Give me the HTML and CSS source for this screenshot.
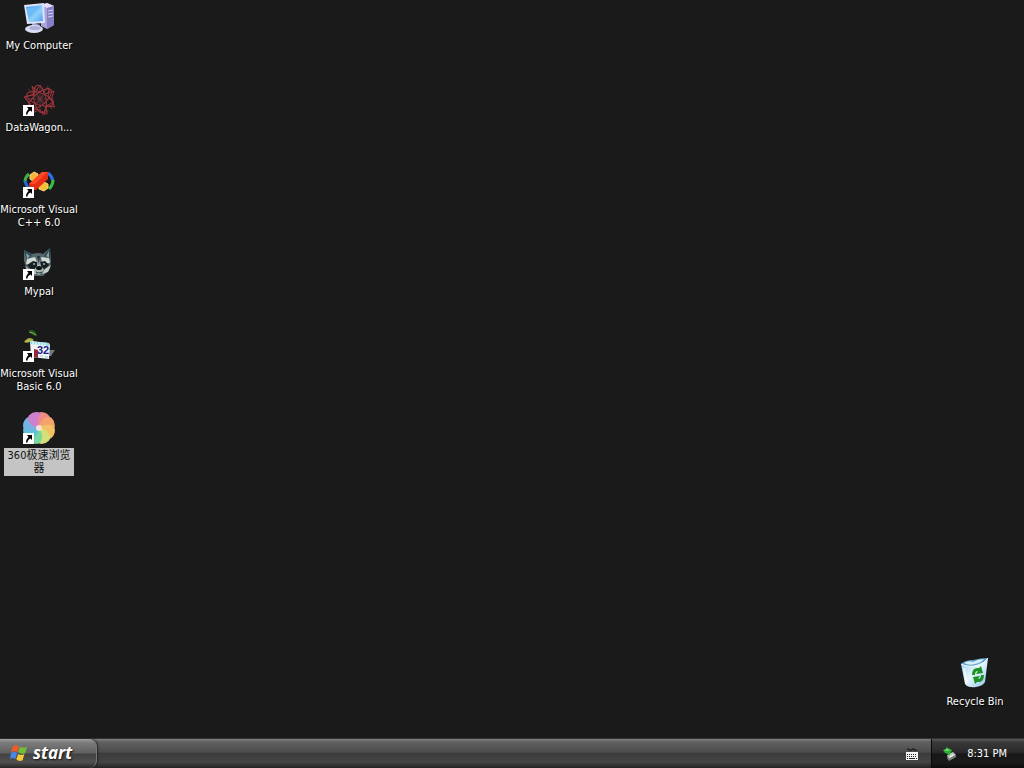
FILE: index.html
```html
<!DOCTYPE html>
<html lang="en">

<head>
    <meta charset="UTF-8">
    <meta name="viewport" content="width=device-width, initial-scale=1.0">
    <title>Desktop</title>
    <link rel="stylesheet" href="styles.css">
</head>

<body>
    <!-- Shared shapes -->
    <svg class="defs" aria-hidden="true">
        <defs>
            <symbol id="shortcut" viewBox="0 0 11 11">
                <rect width="11" height="11" fill="#fff"/>
                <path d="M4 2h5v5L7.500 5.500C5.500 6.500 4.500 7.500 4.500 9.500H3C3 7 4 5.500 5.500 4z" fill="#000"/>
            </symbol>
        </defs>
    </svg>

    <main class="desktop">
        <div class="icons">
            <button type="button" class="icon">
                <svg class="picture" viewBox="0 0 32 32" aria-hidden="true">
                    <defs>
                        <linearGradient id="screen" x1="0" y1="0" x2="1" y2="1">
                            <stop offset="0" stop-color="#3f9df0"/>
                            <stop offset="0.6" stop-color="#8fd0fb"/>
                            <stop offset="1" stop-color="#4c9df0"/>
                        </linearGradient>
                    </defs>
                    <path d="M18 3l6-2 7 3v19l-7 4-6-3z" fill="#a9a5dc"/>
                    <path d="M18 3l6-2 7 3-7 2z" fill="#e3e1fa"/>
                    <path d="M24 6l7-2v19l-7 4z" fill="#8580c4"/>
                    <path d="M25 9l5-1M25 12l5-1M25 15l5-1" stroke="#d5d2f5" stroke-width="1"/>
                    <path d="M9 20l8 3v4l-8-2z" fill="#9c9bcb"/>
                    <ellipse cx="11" cy="27" rx="9" ry="4" fill="#dcdcf2"/>
                    <ellipse cx="12" cy="26" rx="6" ry="2" fill="#aeb0dc"/>
                    <path d="M1 3l20-2 1 20-18 1z" fill="#dde4f8"/>
                    <path d="M3 5l16-2 1 16-14 1z" fill="url(#screen)"/>
                    <path d="M4 6l13-1-11 11z" fill="#6dbbf8"/>
                </svg>
                <span class="label">My Computer</span>
            </button>

            <button type="button" class="icon">
                <svg class="picture" viewBox="0 0 32 32" aria-hidden="true">
                    <g fill="none" stroke="#a5343c" stroke-width="1">
                        <path d="M17 1l5 9 9-3-3 9 4 7-9-1-2 9-7-6-8 3 1-9-6-6 9-2z"/>
                        <path d="M9 2l7 6 10-4-1 9 6 5-8 4 1 8-8-4-9 4 0-9-5-8 9-3z"/>
                        <ellipse cx="17" cy="15" rx="14" ry="6" transform="rotate(20 17 15)"/>
                        <ellipse cx="17" cy="15" rx="14" ry="6" transform="rotate(80 17 15)"/>
                        <ellipse cx="17" cy="15" rx="14" ry="6" transform="rotate(140 17 15)"/>
                    </g>
                    <g fill="none" stroke="#7c3a40" stroke-width="0.8">
                        <path d="M5 5l24 20M29 5L5 25M17 1v28M2 15h29M9 2l16 26M25 2L9 28"/>
                    </g>
                    <use href="#shortcut" x="0" y="21" width="11" height="11"/>
                </svg>
                <span class="label">DataWagon...</span>
            </button>

            <button type="button" class="icon">
                <svg class="picture" viewBox="0 0 32 32" aria-hidden="true">
                    <g fill="none" stroke-width="3">
                        <path d="M6 8Q2 11 2 16" stroke="#3fae49"/>
                        <path d="M2 15Q3 20 7 23" stroke="#2467d8"/>
                        <path d="M25 7Q29 10 30 15" stroke="#2c6fe0"/>
                        <path d="M30 14Q30 19 26 23" stroke="#38c23e"/>
                    </g>
                    <path d="M7 9l4-3 4 2v5l-4 3-4-3z" fill="#f6b43c" stroke="#fbdc85" stroke-width="1"/>
                    <path d="M16 20l5-4 4 2v4l-4 3-5-2z" fill="#f2bf38" stroke="#f9d873" stroke-width="1"/>
                    <path d="M6 18L19 6h6v7L13 24H7z" fill="#e62e14"/>
                    <path d="M6 18L19 6h6L12 18z" fill="#ff4a25"/>
                    <use href="#shortcut" x="0" y="21" width="11" height="11"/>
                </svg>
                <span class="label">Microsoft Visual C++ 6.0</span>
            </button>

            <button type="button" class="icon">
                <svg class="picture" viewBox="0 0 32 32" aria-hidden="true">
                    <path d="M1 2l8 4q7-2 11 0l7-6 1 12-1 9-7 7h-9l-7-5-3-10z" fill="#54676b"/>
                    <path d="M1 2l8 5-5 6zM27 0l-6 8 6 4z" fill="#24495a"/>
                    <path d="M3 5l4 3-3 3zM26 3l-3 5 3 2z" fill="#8c999a"/>
                    <path d="M4 11l8-2 2 5-8 3-3-1zM18 9l8 1 1 5-8 0z" fill="#d3dad4"/>
                    <path d="M4 17l6-4 4 1 1 5-6 3zM17 14l5-1 4 4-4 4-5-2z" fill="#172125"/>
                    <path d="M2 18l5 4 5-1 1 5-6 1zM28 17l-6 4-3 5 6-2z" fill="#c7cec6"/>
                    <path d="M15 9h1l2 9 3 4-5 5-6-4 4-5z" fill="#abb5b1"/>
                    <path d="M14 8h3l-1 9z" fill="#26373d"/>
                    <ellipse cx="16" cy="20" rx="3" ry="2" fill="#0d1113"/>
                    <circle cx="11" cy="16" r="1" fill="#9daea9"/>
                    <circle cx="21" cy="16" r="1" fill="#9daea9"/>
                    <path d="M13 24q3 2 6 0" fill="none" stroke="#334146" stroke-width="1"/>
                    <use href="#shortcut" x="0" y="21" width="11" height="11"/>
                </svg>
                <span class="label">Mypal</span>
            </button>

            <button type="button" class="icon">
                <svg class="picture" viewBox="0 0 32 32" aria-hidden="true">
                    <path d="M6 0q7-1 8 6-6 0-8-6z" fill="#195b20"/>
                    <path d="M1 12q5-7 10-2-5 4-10 2z" fill="#a3a943"/>
                    <path d="M6 2q5 1 7 3M2 12q4-2 8-2" stroke="#d0cc62" stroke-width="0.7" fill="none"/>
                    <path d="M26 20h6l-4 6h-3z" fill="#777"/>
                    <path d="M7 11l19 2 1 2-1 14-18-2z" fill="#f1f5f7"/>
                    <path d="M7 11l19 2v3l-19-2z" fill="#97dce5"/>
                    <path d="M10 11v3M13 12v3M16 12v3M19 13v3M22 13v3" stroke="#fff" stroke-width="1"/>
                    <path d="M11 19l4 1v8l-4-1z" fill="#932b35"/>
                    <path d="M17 26h3M22 27h3" stroke="#90cfd8" stroke-width="1"/>
                    <text class="glyph" x="14" y="24">32</text>
                    <use href="#shortcut" x="0" y="21" width="11" height="11"/>
                </svg>
                <span class="label">Microsoft Visual Basic 6.0</span>
            </button>

            <button type="button" class="icon selected">
                <svg class="picture" viewBox="0 0 32 32" aria-hidden="true">
                    <defs>
                        <path id="petal" d="M16 16C11 10 12 1 18 0Q25 0 28 7Q22 7 16 16z"/>
                    </defs>
                    <circle cx="16" cy="16" r="13" fill="#dfa7b0"/>
                    <use href="#petal" fill="#f28b86"/>
                    <use href="#petal" fill="#f5a36c" transform="rotate(45 16 16)"/>
                    <use href="#petal" fill="#f3c163" transform="rotate(90 16 16)"/>
                    <use href="#petal" fill="#d6e078" transform="rotate(135 16 16)"/>
                    <use href="#petal" fill="#79d7a0" transform="rotate(180 16 16)"/>
                    <use href="#petal" fill="#5cc3d4" transform="rotate(225 16 16)"/>
                    <use href="#petal" fill="#76b4e6" transform="rotate(270 16 16)"/>
                    <use href="#petal" fill="#cf80cc" transform="rotate(315 16 16)"/>
                    <circle cx="16" cy="16" r="3" fill="#f8dfd8"/>
                    <use href="#shortcut" x="0" y="21" width="11" height="11"/>
                </svg>
                <span class="label" lang="zh">360极速浏览器</span>
            </button>
        </div>

        <button type="button" class="icon recycle">
            <svg class="picture" viewBox="0 0 32 32" aria-hidden="true">
                <defs>
                    <linearGradient id="bin" x1="0" y1="0" x2="1" y2="1">
                        <stop offset="0" stop-color="#8ccdf0"/>
                        <stop offset="0.5" stop-color="#e6f6fc"/>
                        <stop offset="1" stop-color="#87c1e8"/>
                    </linearGradient>
                </defs>
                <path d="M2 6q14 2 27-6l-3 24q-2 4-9 5-8 1-11-3z" fill="url(#bin)"/>
                <path d="M2 6q4-4 12-4 8-2 15-2-3 5-10 7-9 3-17-1z" fill="#5fa3cc"/>
                <path d="M5 5q5-3 9-1 5-3 11-3-3 4-9 5-6 2-11-1z" fill="#d8eff9"/>
                <path d="M2 6q8 4 17 1 7-2 10-7" fill="none" stroke="#f7fdff" stroke-width="1"/>
                <path d="M5 10l3 15" stroke="#fff" stroke-width="2" opacity="0.6"/>
                <g fill="#1c9222">
                    <path d="M13 17q0-8 7-7l2-2 2 7-7 1 2-3q-3 0-3 4z"/>
                    <path d="M25 17q0 8-7 7l-2 2-2-7 7-1-2 3q3 0 3-4z"/>
                </g>
            </svg>
            <span class="label">Recycle Bin</span>
        </button>
    </main>

    <footer class="taskbar">
        <button type="button" class="start">
            <svg class="flag" viewBox="0 0 20 20" aria-hidden="true">
                <path d="M3 3q4-3 7 0L8 9Q5 7 1 9z" fill="#ee5a2a"/>
                <path d="M11 3q4 2 8 0l-2 7q-4 2-8-1z" fill="#76bd36"/>
                <path d="M1 10q4-2 7 0l-2 7q-3-3-6 0z" fill="#4688e5"/>
                <path d="M9 11q4 2 7 0l-2 7q-4 2-7-1z" fill="#f6ca35"/>
            </svg>
            <span>start</span>
        </button>
        <button type="button" class="keyboard" aria-label="Keyboard">
            <svg viewBox="0 0 14 14" aria-hidden="true">
                <path d="M2 2h2v1h3V2h2v1h3" fill="none" stroke="#111" stroke-width="1"/>
                <rect x="1" y="5" width="12" height="8" fill="#f4f4f4"/>
                <path d="M2 7.500h10M2 9.500h10" stroke="#222" stroke-width="1" stroke-dasharray="1 1"/>
                <path d="M2 11.500h1M4 11.500h6M11 11.500h1" stroke="#222" stroke-width="1"/>
            </svg>
        </button>
        <div class="tray">
            <button type="button" class="eject" aria-label="Safely Remove Hardware">
                <svg viewBox="0 0 16 16" aria-hidden="true">
                    <path d="M5 9l6-3 3 3-7 4z" fill="#c3cac3"/>
                    <path d="M5 9l2 4 7-4v2l-7 4-2-3z" fill="#7b847b"/>
                    <path d="M8 11l3-2" stroke="#fff" stroke-width="1"/>
                    <path d="M1 4l3-1V1l6 3-3 6-1-2-3-1z" fill="#2ead36"/>
                    <path d="M2 4l3-1 3 1-3 1z" fill="#7ce87b"/>
                </svg>
            </button>
            <time datetime="20:31">8:31 PM</time>
        </div>
    </footer>
</body>

</html>
```
FILE: styles.css
```css
* {
    box-sizing: border-box;
}

body {
    display: flex;
    flex-direction: column;
    min-height: 100vh;
    margin: 0;
    background-color: #1a1a1a;
    color: #fff;
    font-family: "DejaVu Sans Condensed", "Noto Sans CJK SC", sans-serif;
    font-size: 11px;
}

button {
    padding: 0;
    border: none;
    background: none;
    color: inherit;
    font: inherit;
    cursor: default;
}

svg {
    display: block;
}

.defs {
    display: none;
}

/* Desktop */
.desktop {
    display: flex;
    flex: 1;
    justify-content: space-between;
    align-items: flex-end;
    padding-right: 10px;
}

.icons {
    display: grid;
    grid-auto-rows: 82px;
    align-self: flex-start;
}

.icon {
    display: flex;
    flex-direction: column;
    align-items: center;
    gap: 4px;
    width: 78px;
    padding-top: 2px;
}

.picture {
    width: 32px;
    height: 32px;
}

.label {
    padding: 1px 0;
    line-height: 13px;
    text-align: center;
    text-shadow: 1px 1px 1px #000;
}

.selected .label {
    width: 70px;
    background-color: #c4c4c4;
    color: #111;
    text-shadow: none;
}

.recycle {
    height: 82px;
}

.glyph {
    fill: #1c2488;
    font-family: "Liberation Sans", sans-serif;
    font-size: 11px;
    font-weight: bold;
}

/* Taskbar */
.taskbar {
    display: flex;
    height: 30px;
    border-top: 1px solid #333;
    background: linear-gradient(#808080, #606060 10%, #4c4c4c 45%, #3c3c3c 50%, #444 80%, #222);
}

.start {
    display: flex;
    align-items: center;
    gap: 5px;
    width: 97px;
    padding: 0 0 2px 10px;
    border-right: 1px solid #777;
    border-radius: 0 8px 8px 0;
    background: linear-gradient(#a0a0a0, #7c7c7c 12%, #606060 48%, #424242 52%, #505050 80%, #252525);
    box-shadow: 1px 0 2px #222;
    font-family: "Open Sans", sans-serif;
    font-size: 17px;
    font-style: italic;
    font-weight: bold;
    line-height: 24px;
    text-shadow: 1px 1px 2px #111;
}

.flag {
    width: 18px;
    height: 18px;
}

.keyboard {
    margin-left: auto;
    padding: 0 12px;
}

.keyboard svg {
    width: 14px;
    height: 14px;
}

.tray {
    display: flex;
    align-items: center;
    gap: 9px;
    padding: 0 17px 0 10px;
    border-left: 1px solid #080808;
    background: linear-gradient(#585858, #383838 12%, #2a2a2a 46%, #171717 52%, #1b1b1b 80%, #0c0c0c);
}

.eject svg {
    width: 16px;
    height: 16px;
}
```
